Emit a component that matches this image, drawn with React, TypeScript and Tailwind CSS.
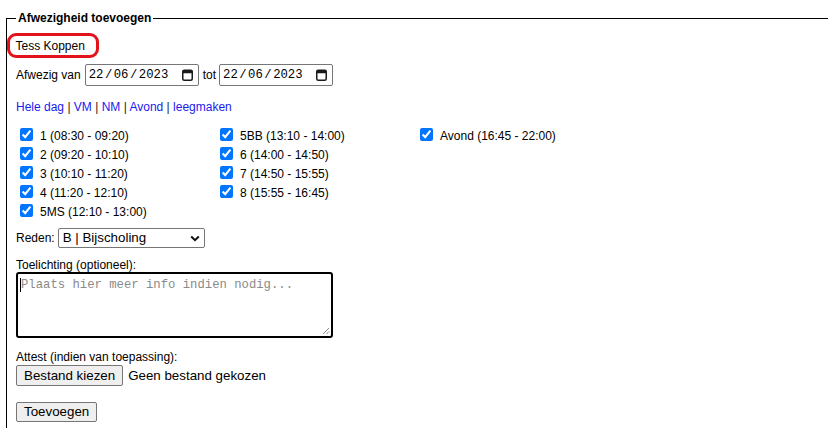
import React from "react";

const sans = { fontFamily: '"Liberation Sans", Arial, sans-serif' };
const mono = { fontFamily: '"Liberation Mono", "DejaVu Sans Mono", monospace' };

function CalendarIcon() {
  return (
    <svg width="11" height="12" viewBox="0 0 11 12" className="block">
      <rect x="0.75" y="1.25" width="9.5" height="10" rx="1.5" fill="none" stroke="#1a1a1a" strokeWidth="1.5" />
      <rect x="0.75" y="1.25" width="9.5" height="3" fill="#1a1a1a" />
    </svg>
  );
}

function DateBox({ value }: { value: [string, string, string] }) {
  return (
    <div className="flex items-center w-[114px] h-[22px] border border-[#767676] rounded-[2px] bg-white pl-[3px] pr-[5px]">
      <div className="flex items-center text-[12.25px] text-black leading-none" style={mono}>
        <span>{value[0]}</span>
        <span className="mx-[1.5px]">/</span>
        <span>{value[1]}</span>
        <span className="mx-[1.5px]">/</span>
        <span>{value[2]}</span>
      </div>
      <div className="ml-auto">
        <CalendarIcon />
      </div>
    </div>
  );
}

function Check({ label }: { label: string }) {
  return (
    <label className="flex items-center h-[19px]">
      <input type="checkbox" checked readOnly className="ml-[4px] mr-[7px] w-[13px] h-[13px]" />
      <span className="text-[12px] leading-[14px] pt-[2px]">{label}</span>
    </label>
  );
}

export default function App() {
  const col1 = ["1 (08:30 - 09:20)", "2 (09:20 - 10:10)", "3 (10:10 - 11:20)", "4 (11:20 - 12:10)", "5MS (12:10 - 13:00)"];
  const col2 = ["5BB (13:10 - 14:00)", "6 (14:00 - 14:50)", "7 (14:50 - 15:55)", "8 (15:55 - 16:45)"];
  const col3 = ["Avond (16:45 - 22:00)"];

  return (
    <div className="w-[828px] h-[428px] overflow-hidden bg-white text-black" style={sans}>
      <fieldset className="ml-[6px] mt-[11px] w-[840px] h-[520px] border border-black pl-[9px] pr-[9px]">
        <legend className="px-[2px] font-bold text-[12px] leading-[14px]">Afwezigheid toevoegen</legend>

        {/* name with red highlight */}
        <div className="mt-[8px] -ml-[9px] flex items-center w-[92px] h-[25px] border-[3.5px] border-[#e3131b] rounded-[9px] pl-[5.5px]">
          <span className="text-[12px] leading-[14px]">Tess Koppen</span>
        </div>

        {/* dates */}
        <div className="mt-[6px] flex items-center h-[22px]">
          <span className="text-[12px] leading-[14px]">Afwezig van</span>
          <div className="ml-[4px]">
            <DateBox value={["22", "06", "2023"]} />
          </div>
          <span className="ml-[4px] text-[12px] leading-[14px]">tot</span>
          <div className="ml-[3px]">
            <DateBox value={["22", "06", "2023"]} />
          </div>
        </div>

        {/* quick links */}
        <div className="mt-[14px] text-[12px] leading-[14px]">
          <a className="text-[#1a1aee]">Hele dag</a>
          <span className="text-[#222]"> | </span>
          <a className="text-[#1a1aee]">VM</a>
          <span className="text-[#222]"> | </span>
          <a className="text-[#1a1aee]">NM</a>
          <span className="text-[#222]"> | </span>
          <a className="text-[#1a1aee]">Avond</a>
          <span className="text-[#222]"> | </span>
          <a className="text-[#1a1aee]">leegmaken</a>
        </div>

        {/* hour checkboxes */}
        <div className="mt-[11px] flex">
          <div className="w-[200px] flex flex-col">
            {col1.map((l) => (
              <Check key={l} label={l} />
            ))}
          </div>
          <div className="w-[200px] flex flex-col">
            {col2.map((l) => (
              <Check key={l} label={l} />
            ))}
          </div>
          <div className="w-[200px] flex flex-col">
            {col3.map((l) => (
              <Check key={l} label={l} />
            ))}
          </div>
        </div>

        {/* reason */}
        <div className="mt-[8px] flex items-center h-[20px]">
          <span className="text-[12px] leading-[14px]">Reden:</span>
          <div className="ml-[3px] flex items-center w-[147px] h-[20px] border border-[#767676] rounded-[2px] bg-white pl-[4px] pr-[4px]">
            <span className="text-[13.33px] leading-none">B | Bijscholing</span>
            <svg width="10" height="7" viewBox="0 0 10 7" className="ml-auto">
              <path d="M1.2 1.5 L5 5.2 L8.8 1.5" fill="none" stroke="#111" strokeWidth="2" />
            </svg>
          </div>
        </div>

        {/* comment */}
        <div className="mt-[10px] text-[12px] leading-[14px]">Toelichting (optioneel):</div>
        <div className="relative w-[317px] h-[66px] border-2 border-black rounded-[3px] bg-white">
          <div className="absolute left-[2px] top-[4px] w-px h-[14px] bg-black" />
          <div className="pl-[3px] pt-[3px] text-[12.25px] leading-[16px] text-[#8a8a8a]" style={mono}>
            Plaats hier meer info indien nodig...
          </div>
          <svg width="9" height="9" viewBox="0 0 9 9" className="absolute right-[1px] bottom-[1px]">
            <path d="M8 2 L2 8 M8 5.5 L5.5 8" stroke="#8a8a8a" strokeWidth="1" />
          </svg>
        </div>

        {/* attachment */}
        <div className="mt-[12px] text-[12px] leading-[14px]">Attest (indien van toepassing):</div>
        <div className="mt-px flex items-center">
          <div className="flex items-center h-[21px] border border-[#767676] rounded-[2px] bg-[#efefef] px-[7px] text-[13.33px] leading-none">
            Bestand kiezen
          </div>
          <span className="ml-[5px] text-[13.33px] leading-none">Geen bestand gekozen</span>
        </div>

        {/* submit */}
        <div className="mt-[13px]">
          <div className="inline-flex items-center h-[20px] border border-[#767676] rounded-[2px] bg-[#efefef] px-[7px] text-[13.33px] leading-none">
            Toevoegen
          </div>
        </div>
      </fieldset>
    </div>
  );
}
